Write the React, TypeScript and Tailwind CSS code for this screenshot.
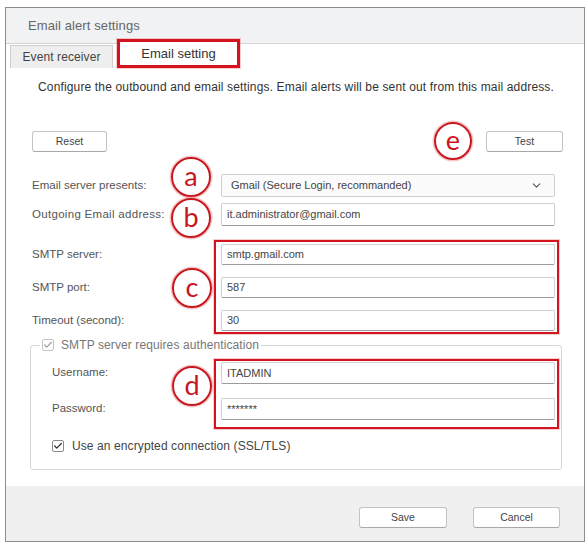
import React from 'react';
import { ChevronDown, Check } from 'lucide-react';

const Field = ({ value, className = '' }: { value: string; className?: string }) => (
  <div
    className={`flex items-center rounded-[2px] border border-[#d0d0d0] border-b-[#9c9c9c] bg-white px-[5px] text-[11px] text-[#444] ${className}`}
  >
    {value}
  </div>
);

const Marker = ({ letter, className }: { letter: string; className: string }) => (
  <div
    className={`absolute flex items-center justify-center rounded-full border-[2.5px] border-[#c8161f] bg-white/90 font-['Lato',sans-serif] text-[27px] leading-none text-[#c8161f] shadow-[0_0_0_1.5px_rgba(235,130,130,0.45)] ${className}`}
  >
    <span className="-mt-[4px]">{letter}</span>
  </div>
);

const CheckBox = ({ dim }: { dim?: boolean }) => (
  <span
    className={`flex h-[12px] w-[12px] items-center justify-center rounded-[2px] border bg-white ${
      dim ? 'border-[#c4c4c4] text-[#a0a0a0]' : 'border-[#8a8a8a] text-[#333]'
    }`}
  >
    <Check className="h-[10px] w-[10px]" strokeWidth={3} />
  </span>
);

const Button = ({ label, className = '' }: { label: string; className?: string }) => (
  <button className={`h-[21px] rounded-[3px] border border-[#c3c3c3] border-b-[#a8a8a8] bg-white text-[10.5px] text-[#444] ${className}`}>
    {label}
  </button>
);

const App = () => {
  return (
    <div className="h-[543px] w-[587px] bg-white pl-[5px] pt-[7px] font-['Liberation_Sans',Arial,sans-serif]">
      <div className="relative flex h-[535px] w-[580px] flex-col border border-[#8c8c8c] bg-white">
        {/* Title bar */}
        <div className="flex h-[36px] items-center border-b border-[#d4d4d4] bg-[#f1f2f4] pl-[22px] text-[13px] tracking-[0.1px] text-[#666]">
          Email alert settings
        </div>

        {/* Tabs */}
        <div className="flex h-[24px] items-end pl-[4px]">
          <div className="flex h-[23px] w-[103px] items-center justify-center border border-b-0 border-[#cfcfcf] bg-[#eeeeee] text-[12px] tracking-[0.1px] text-[#444]">
            Event receiver
          </div>
          <div className="ml-[4px] flex h-[29px] w-[123px] items-center justify-center border-[3px] border-[#d3131f] bg-white text-[13px] text-[#333] shadow-[0_0_0_1px_rgba(235,130,130,0.4)]">
            Email setting
          </div>
        </div>

        {/* Panel */}
        <div className="flex flex-col pl-[26px]">
          <p className="ml-[6px] mt-[11px] h-[16px] text-[12px] leading-[16px] tracking-[0.15px] text-[#333]">
            Configure the outbound and email settings. Email alerts will be sent out from this mail address.
          </p>

          <div className="mt-[36px] flex w-[531px] justify-between">
            <Button label="Reset" className="w-[75px]" />
            <Button label="Test" className="w-[77px]" />
          </div>

          {/* Server preset */}
          <div className="mt-[22px] flex h-[23px] items-center">
            <span className="w-[189px] text-[11.5px] text-[#555]">Email server presents:</span>
            <div className="flex h-[23px] w-[334px] items-center justify-between rounded-[2px] border border-[#cfcfcf] bg-[#fbfbfb] pl-[9px] pr-[11px] text-[11px] text-[#444]">
              <span>Gmail (Secure Login, recommanded)</span>
              <ChevronDown className="h-[13px] w-[13px] text-[#555]" strokeWidth={2} />
            </div>
          </div>

          <div className="mt-[6px] flex h-[23px] items-center">
            <span className="w-[189px] text-[11.5px] tracking-[0.3px] text-[#555]">Outgoing Email address:</span>
            <Field value="it.administrator@gmail.com" className="h-[23px] w-[334px]" />
          </div>

          {/* SMTP connection */}
          <div className="mt-[14px] flex">
            <div className="flex w-[182px] flex-col gap-[12px] pt-[4px] text-[11.5px] text-[#555]">
              <span className="flex h-[21px] items-center">SMTP server:</span>
              <span className="flex h-[21px] items-center">SMTP port:</span>
              <span className="flex h-[21px] items-center">Timeout (second):</span>
            </div>
            <div className="flex w-[345px] flex-col gap-[12px] border-2 border-[#d3131f] pb-[1px] pl-[5px] pr-[2px] pt-[2px] shadow-[0_0_0_1px_rgba(235,130,130,0.4)]">
              <Field value="smtp.gmail.com" className="h-[21px]" />
              <Field value="587" className="h-[21px]" />
              <Field value="30" className="h-[21px]" />
            </div>
          </div>

          {/* Authentication */}
          <fieldset className="-ml-[2px] mt-[4px] w-[532px] rounded-[3px] border border-[#d6d6d6] pb-[16px] pl-[21px]">
            <legend className="-ml-[12px] flex h-[14px] items-center gap-[7px] px-[2px] text-[12px] tracking-[0.1px] text-[#777]">
              <CheckBox dim />
              SMTP server requires authentication
            </legend>
            <div className="mt-[7px] flex">
              <div className="flex w-[162px] flex-col pt-[3px] text-[11.5px] text-[#555]">
                <span className="flex h-[22px] items-center">Username:</span>
                <span className="mt-[14px] flex h-[22px] items-center">Password:</span>
              </div>
              <div className="flex w-[345px] flex-col gap-[14px] border-2 border-[#d3131f] pb-[7px] pl-[5px] pr-[2px] pt-[1px] shadow-[0_0_0_1px_rgba(235,130,130,0.4)]">
                <Field value="ITADMIN" className="h-[22px]" />
                <Field value="*******" className="h-[22px]" />
              </div>
            </div>
            <label className="mt-[10px] flex h-[14px] items-center gap-[8px] text-[12px] tracking-[0.1px] text-[#444]">
              <CheckBox />
              Use an encrypted connection (SSL/TLS)
            </label>
          </fieldset>
        </div>

        {/* Footer */}
        <div className="mt-auto flex h-[55px] justify-end gap-[26px] bg-[#f0f0f0] pr-[24px] pt-[21px]">
          <Button label="Save" className="w-[88px]" />
          <Button label="Cancel" className="w-[87px]" />
        </div>

        {/* Callouts */}
        <Marker letter="a" className="left-[165px] top-[149px] h-[40px] w-[40px]" />
        <Marker letter="b" className="left-[165px] top-[190px] h-[40px] w-[40px]" />
        <Marker letter="c" className="left-[166px] top-[260px] h-[40px] w-[40px]" />
        <Marker letter="d" className="left-[166px] top-[358px] h-[40px] w-[40px]" />
        <Marker letter="e" className="left-[428px] top-[114px] h-[38px] w-[38px]" />
      </div>
    </div>
  );
};

export default App;
